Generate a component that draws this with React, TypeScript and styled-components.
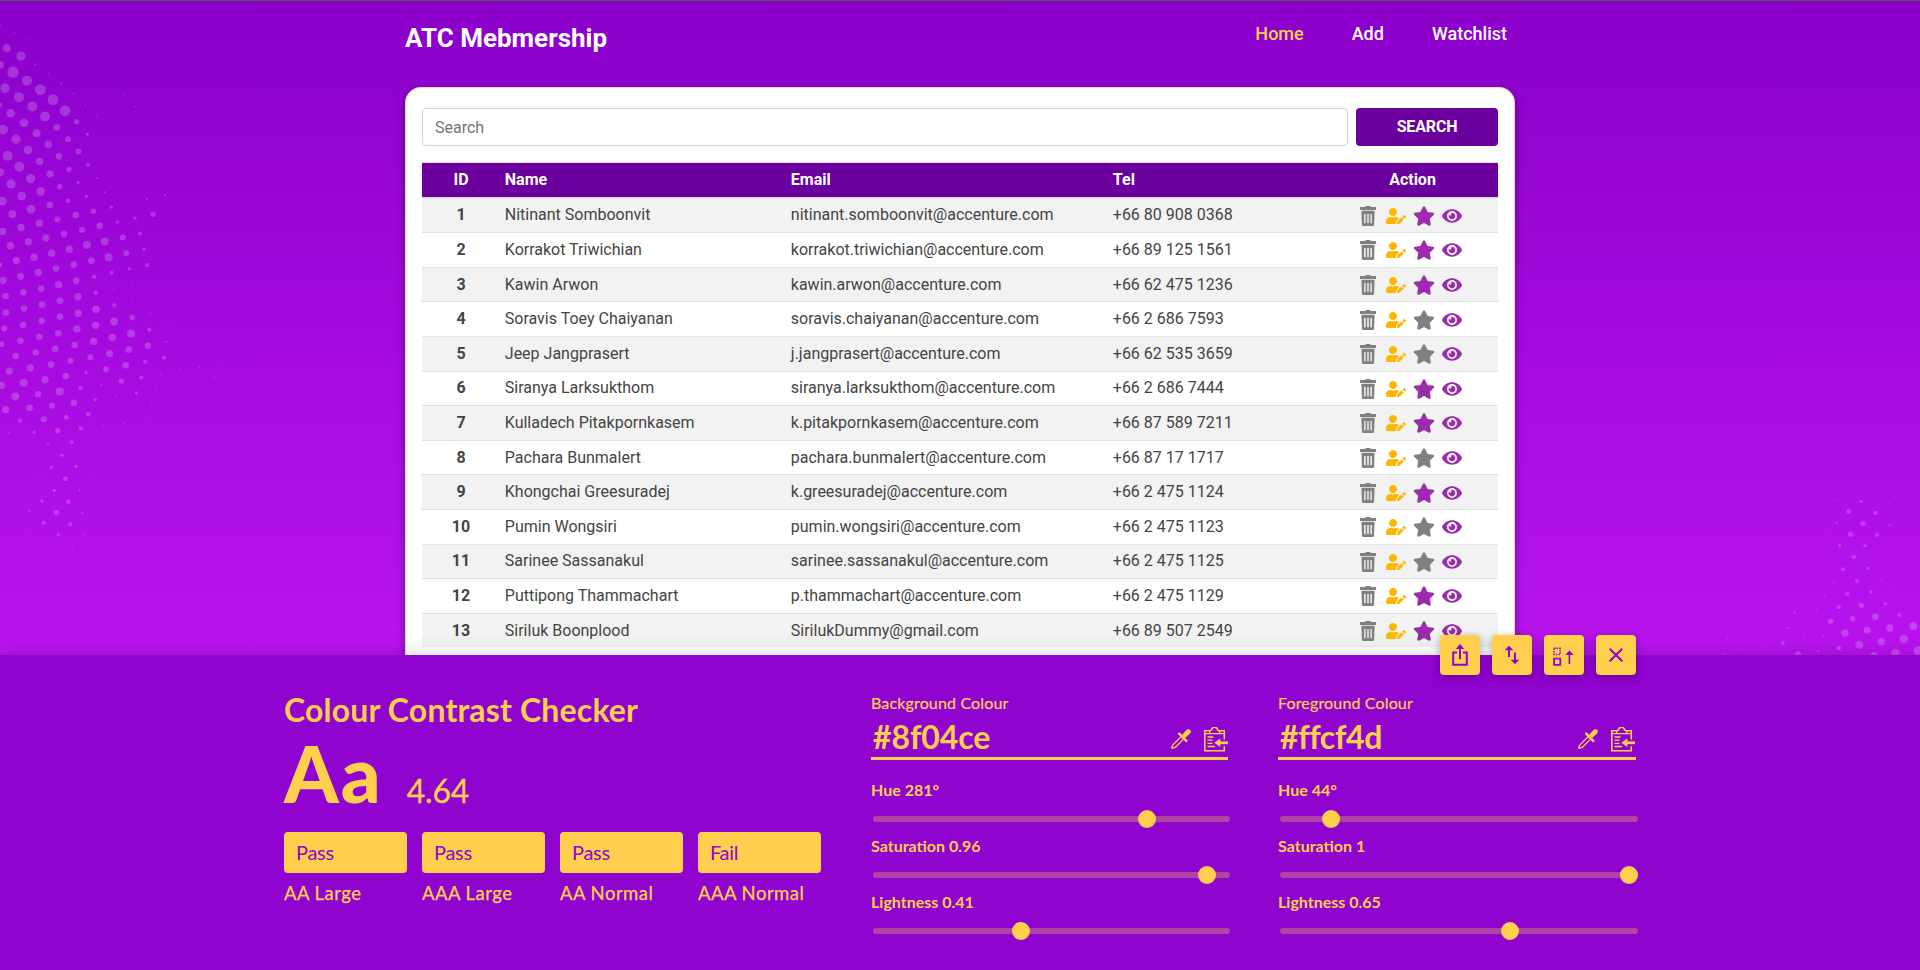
import React from "react";
import styled, { createGlobalStyle } from "styled-components";
import { FaEye, FaStar, FaUserEdit } from "react-icons/fa";

const GlobalStyle = createGlobalStyle`
  *, *::before, *::after { box-sizing: border-box; }
  body { margin: 0; font-family: Roboto, sans-serif; font-size: 16px; line-height: 1.5; color: #444; }
`;

const accent = "#ffcf4d";
const purple = "#8f04ce";
const deepPurple = "#6b009e";

const Page = styled.div`
  position: relative;
  height: 970px;
  overflow: hidden;
  border-top: 1px solid #555a58;
  background: linear-gradient(180deg, #8a00c9 0, #8f03cf 80px, #a70be0 370px, #b814ee 655px);
`;

const Dots = styled.svg<{ $side: "left" | "right" }>`
  position: absolute;
  ${(p) => (p.$side === "left" ? "left: 0; top: -1px;" : "right: 0; top: 469px;")}
  fill: rgba(255, 255, 255, 0.2);
`;

const Container = styled.div`
  position: relative;
  width: 1110px;
  margin: 0 auto;
`;

const Header = styled.header`
  display: flex;
  justify-content: space-between;
  height: 86px;
  padding: 17px 8px 0 0;
  color: #fff;
`;

const Brand = styled.h1`
  margin: 0;
  font-size: 26px;
  font-weight: 700;
  line-height: 40px;
`;

const Nav = styled.nav`
  display: flex;
  gap: 48px;
`;

const NavItem = styled.a<{ $active?: boolean }>`
  font-size: 18px;
  font-weight: 500;
  line-height: 32px;
  color: ${(p) => (p.$active ? accent : "#fff")};
`;

const Card = styled.main`
  padding: 20px 16px 24px;
  background: #fff;
  border: 1px solid rgba(0, 0, 0, 0.125);
  border-radius: 16px;
  box-shadow: 0 4px 10px rgba(0, 0, 0, 0.4);
`;

const SearchBar = styled.div`
  display: flex;
  gap: 8px;
  margin-bottom: 16px;
`;

const SearchInput = styled.input`
  flex: 1;
  height: 38px;
  padding: 6px 12px;
  border: 1px solid #ced4da;
  border-radius: 4px;
  font: 400 16px/24px Roboto, sans-serif;
  &::placeholder { color: #6c757d; opacity: 1; }
`;

const SearchButton = styled.button`
  width: 142px;
  height: 38px;
  padding: 0 6px 2px 6px;
  border: 0;
  border-radius: 4px;
  background: ${deepPurple};
  color: #fff;
  font: 700 16px Roboto, sans-serif;
  letter-spacing: -0.15px;
`;

const Table = styled.table`
  width: 100%;
  table-layout: fixed;
  border-collapse: collapse;
  tbody tr:nth-child(odd) { background: #f2f2f2; }
`;

const HeadCell = styled.th<{ $center?: boolean }>`
  padding: 4.8px;
  border-top: 1px solid #dee2e6;
  border-bottom: 2px solid #dee2e6;
  background: ${deepPurple};
  color: #fff;
  font-weight: 700;
  text-align: ${(p) => (p.$center ? "center" : "left")};
`;

const Cell = styled.td<{ $id?: boolean }>`
  padding: 4.8px;
  border-top: 1px solid #dee2e6;
  font-weight: ${(p) => (p.$id ? 700 : 400)};
  text-align: ${(p) => (p.$id ? "center" : "left")};
`;

const Actions = styled.div`
  display: flex;
  justify-content: center;
  align-items: center;
  gap: 8px;
  height: 24px;
  padding: 1px 6px 0 0;
`;

const TrashSvg = styled.svg`
  display: block;
  fill: #808080;
`;
const EditIcon = styled(FaUserEdit)`color: #ffb600;`;
const StarIcon = styled(FaStar)<{ $on: boolean }>`
  margin: 0 -1px;
  color: ${(p) => (p.$on ? "#9b2cac" : "#808080")};
`;
const EyeIcon = styled(FaEye)`color: #9b2cac;`;

const Panel = styled.section`
  position: absolute;
  left: 0;
  right: 0;
  bottom: 0;
  height: 315px;
  padding-top: 33px;
  background: ${purple};
  color: ${accent};
  font-family: Lato, sans-serif;
  box-shadow: 0 0 20px rgba(0, 0, 0, 0.18);
`;

const PanelInner = styled.div`
  position: relative;
  display: flex;
  width: 1352px;
  margin: 0 auto;
`;

const ToolButtons = styled.div`
  position: absolute;
  right: 0;
  top: -53px;
  display: flex;
  gap: 12px;
`;

const ToolButton = styled.button`
  display: block;
  width: 40px;
  height: 40px;
  padding: 0;
  border: 0;
  border-radius: 4px;
  background: ${accent};
  box-shadow: 0 2px 8px rgba(0, 0, 0, 0.3);
  svg { display: block; fill: none; stroke: ${purple}; stroke-width: 2; }
`;

const Summary = styled.div`
  width: 538px;
`;

const PanelTitle = styled.h2`
  margin: 0;
  padding-top: 2px;
  height: 42px;
  font-size: 32px;
  line-height: 40px;
  font-weight: 700;
  letter-spacing: 0.17px;
`;

const Sample = styled.div`
  display: flex;
  align-items: baseline;
  gap: 24px;
  height: 80px;
  margin: 3px 0 19px;
  line-height: 80px;
`;

const SampleText = styled.span`
  font-size: 78px;
  font-weight: 900;
  letter-spacing: 2px;
`;

const Ratio = styled.span`
  font-size: 32px;
  letter-spacing: -0.2px;
  -webkit-text-stroke: 0.3px;
`;

const Results = styled.div`
  display: flex;
  gap: 15px;
`;

const Result = styled.div`
  width: 123px;
`;

const Verdict = styled.div`
  display: flex;
  align-items: center;
  height: 41px;
  padding: 0 0 1px 12px;
  margin-bottom: 8px;
  border-radius: 4px;
  background: ${accent};
  color: ${purple};
  font-size: 20px;
  line-height: 24px;
  letter-spacing: -0.3px;
`;

const ResultLabel = styled.div`
  font-size: 18.5px;
  line-height: 24px;
  letter-spacing: 0.48px;
  white-space: nowrap;
  -webkit-text-stroke: 0.25px;
`;

const ColourColumn = styled.div<{ $width: number; $offset: number }>`
  width: ${(p) => p.$width}px;
  margin-left: ${(p) => p.$offset}px;
  padding-top: 5px;
`;

const FieldLabel = styled.div`
  font-size: 16px;
  line-height: 20px;
  letter-spacing: 0.15px;
  -webkit-text-stroke: 0.2px;
`;

const HexField = styled.div`
  display: flex;
  align-items: center;
  height: 47px;
  padding-left: 2px;
  margin-bottom: 20px;
  border-bottom: 3px solid ${accent};
`;

const HexValue = styled.span<{ $tight?: boolean }>`
  flex: 1;
  padding-top: 3px;
  font-size: 32px;
  font-weight: 700;
  line-height: 38px;
  letter-spacing: ${(p) => (p.$tight ? "-0.4px" : "-0.1px")};
`;

const FieldIcons = styled.div<{ $inset: number }>`
  display: flex;
  align-items: center;
  gap: 13px;
  padding: 8px ${(p) => p.$inset}px 0 0;
  svg { display: block; }
`;

const SliderLabel = styled.div`
  font-size: 16px;
  font-weight: 700;
  line-height: 20px;
`;

const Track = styled.div`
  height: 6px;
  margin: 16px -2px 14px 2px;
  padding: 0 9px;
  border-radius: 3px;
  background: #b145a4;
`;

const Thumb = styled.div`
  position: relative;
  top: -6px;
  width: 18px;
  height: 18px;
  margin-left: -9px;
  border-radius: 50%;
  background: ${accent};
`;

const ThumbRail = styled.div`
  height: 6px;
`;

type Dot = [number, number, number];

/* Halftone dots: centre x, centre y, radius, in thirds of a pixel. */
const leftDots: Dot[] = [
  [1,72,3],[44,90,3],[87,111,3],[20,135,12],[63,157,14],[0,181,12],[105,180,4],[39,202,17],[145,205,3],[81,226,15],[184,233,4],[15,247,14],[121,251,16],[221,262,4],[57,272,15],[159,279,16],[374,265,3],[405,299,3],[256,294,3],[0,293,7],[97,298,15],[195,310,16],[32,317,13],[135,326,15],[290,327,3],
  [72,344,13],[230,341,8],[9,363,15],[170,357,10],[110,373,12],[262,376,5],[48,390,14],[204,390,9],[145,404,11],[292,412,2],[84,420,13],[235,424,9],[23,436,15],[177,438,10],[119,452,11],[264,461,6],[58,467,15],[207,474,8],[0,483,12],[150,487,11],[92,500,14],[290,499,4],[33,515,14],[234,511,5],[179,523,8],
  [122,536,13],[314,538,4],[65,549,13],[259,550,5],[7,563,13],[204,562,7],[149,574,10],[93,586,13],[334,580,5],[280,591,8],[37,599,12],[227,602,10],[172,614,9],[118,625,11],[352,622,5],[405,611,5],[441,557,4],[495,546,4],[459,600,8],[299,632,10],[63,637,11],[246,644,9],[8,648,11],[192,655,10],[138,666,11],[368,665,9],[420,654,6],
  [31,688,11],[85,677,11],[314,676,12],[261,686,12],[208,698,11],[432,698,5],[155,709,11],[379,709,9],[102,720,11],[326,720,12],[49,730,11],[274,730,10],[0,741,7],[221,741,10],[441,742,6],[168,752,10],[388,753,5],[115,763,11],[335,764,6],[62,774,10],[282,775,7],[9,785,11],[229,786,10],[176,797,11],[394,798,3],[123,808,10],[341,809,3],[70,819,10],[287,820,7],[17,829,10],
  [234,831,11],[180,842,10],[397,844,3],[126,853,10],[343,854,6],[72,864,10],[288,866,11],[18,875,10],[235,877,11],[451,878,3],[180,887,10],[397,889,8],[125,898,10],[342,900,12],[69,910,10],[287,911,11],[503,912,2],[13,920,9],[231,921,11],[448,923,6],[175,933,10],[393,934,12],[118,943,10],[337,945,11],[61,954,10],[281,956,11],[499,957,4],
  [4,964,9],[224,966,10],[443,968,10],[166,977,10],[386,979,10],[548,992,2],[107,987,10],[329,990,11],[47,997,10],[271,1000,9],[492,1002,6],[212,1010,9],[435,1013,6],[655,1015,2],[153,1021,10],[377,1023,10],[598,1026,4],[91,1030,11],[318,1034,9],[540,1036,3],[28,1039,11],[258,1044,5],[482,1047,3],[197,1053,10],[424,1057,6],[642,1058,3],
  [135,1063,11],[364,1067,8],[587,1069,2],[71,1072,12],[304,1077,4],[529,1081,2],[5,1079,11],[242,1087,6],[470,1091,3],[179,1096,12],[409,1100,5],[114,1104,10],[348,1110,3],[575,1114,2],[46,1110,12],[286,1119,5],[222,1128,10],[455,1134,3],[156,1136,9],[393,1143,3],[89,1142,10],[17,1147,11],[331,1153,2],[265,1160,7],[199,1168,7],[131,1174,9],[60,1178,6],[373,1185,3],[436,1176,2],[309,1193,3],
  [242,1200,6],[173,1206,8],[102,1210,5],[28,1213,4],[417,1217,2],[284,1232,3],[215,1238,6],[144,1243,4],[70,1245,2],[258,1270,3],[186,1275,5],[112,1277,3],[228,1306,5],[154,1308,5],[196,1341,7],[120,1341,2],[270,1338,2],[163,1373,5],[239,1373,4],[126,1403,5],[205,1405,7],[281,1405,2],[88,1431,4],[169,1435,8],[247,1437,4],[131,1464,6],[211,1468,6],[92,1491,2],[175,1497,5],[254,1499,3],[136,1525,2],[217,1530,3],[47,1458,2],
];

const rightDots: Dot[] = [
  [620,59,2],[584,91,3],[663,94,5],[701,66,1],[745,101,3],[626,125,7],[706,129,7],[590,158,4],[669,160,8],[749,165,4],[632,193,8],[711,195,6],[557,194,2],[599,227,5],[675,227,5],[755,230,2],[641,261,7],[567,265,2],[609,298,6],[683,295,5],[580,337,3],[651,333,6],[725,330,3],[553,377,3],[622,371,6],[693,366,5],[767,364,2],[596,412,6],[664,406,8],[736,401,5],[810,398,3],[529,419,3],[420,394,2],[401,438,2],[464,428,4],[508,463,2],[572,454,8],[638,446,8],[706,440,10],[778,435,6],[444,473,4],[382,484,2],[551,498,4],[615,489,11],[681,481,10],[749,474,11],[820,468,12],[262,504,3],[428,519,6],[489,508,3],[596,534,7],[658,524,12],[724,515,11],[791,507,13],[368,529,2],[308,540,2],[251,552,3],[534,544,4],[474,553,9],[702,557,11],[766,549,13],[834,542,13],
];

const Halftone = ({ side, dots, width, height, stretch }: { side: "left" | "right"; dots: Dot[]; width: number; height: number; stretch: number }) => (
  <Dots $side={side} width={width} height={height} viewBox={`0 0 ${width * 3} ${height * 3}`}>
    {dots.map(([x, y, r], i) => (
      <circle key={i} cx={x} cy={y * stretch} r={r < 5 ? r * 0.75 : r} />
    ))}
  </Dots>
);

const members: [string, string, string, boolean][] = [
  ["Nitinant Somboonvit", "nitinant.somboonvit@accenture.com", "+66 80 908 0368", true],
  ["Korrakot Triwichian", "korrakot.triwichian@accenture.com", "+66 89 125 1561", true],
  ["Kawin Arwon", "kawin.arwon@accenture.com", "+66 62 475 1236", true],
  ["Soravis Toey Chaiyanan", "soravis.chaiyanan@accenture.com", "+66 2 686 7593", false],
  ["Jeep Jangprasert", "j.jangprasert@accenture.com", "+66 62 535 3659", false],
  ["Siranya Larksukthom", "siranya.larksukthom@accenture.com", "+66 2 686 7444", true],
  ["Kulladech Pitakpornkasem", "k.pitakpornkasem@accenture.com", "+66 87 589 7211", true],
  ["Pachara Bunmalert", "pachara.bunmalert@accenture.com", "+66 87 17 1717", false],
  ["Khongchai Greesuradej", "k.greesuradej@accenture.com", "+66 2 475 1124", true],
  ["Pumin Wongsiri", "pumin.wongsiri@accenture.com", "+66 2 475 1123", false],
  ["Sarinee Sassanakul", "sarinee.sassanakul@accenture.com", "+66 2 475 1125", false],
  ["Puttipong Thammachart", "p.thammachart@accenture.com", "+66 2 475 1129", true],
  ["Siriluk Boonplood", "SirilukDummy@gmail.com", "+66 89 507 2549", true],
];

const TrashIcon = () => (
  <TrashSvg width="20" height="20" viewBox="0 0 20 20">
    <path d="M7.500 0h5v1H18v3H2V1h5.500z" />
    <path fillRule="evenodd" d="M3.400 4.700h13.200L16.100 18.800a1.300 1.300 0 0 1-1.300 1.200H5.200a1.300 1.300 0 0 1-1.300-1.200zM6.200 8v9.200h1.400V8zm3.100 0v9.200h1.400V8zm3.100 0v9.200h1.400V8z" />
  </TrashSvg>
);

const EyedropperIcon = () => (
  <svg width="20" height="20" viewBox="0 0 20 20" fill="none" stroke={accent}>
    <path d="M11.300 6.500 2 15.800 .8 18.200v1h1.100l2.600-1.100 9.200-9.200" strokeWidth="1.300" />
    <path d="M8.200 4.700 15.300 11.800" strokeWidth="2.600" strokeLinecap="round" />
    <path d="m11 6 3.500-4c1.600-2 3.500-2.400 4.700-1.200s.8 3.200-1.200 4.700l-4 3.500z" fill={accent} stroke="none" />
  </svg>
);

const ClipboardIcon = () => (
  <svg width="24" height="25" viewBox="0 0 24 25" fill="none" stroke={accent} strokeWidth="1.500">
    <path d="M20.300 12.500V3.700H15l-1.500-1a3 3 0 0 0-5.900 0l-1.500 1H.8v20h19.500v-4.500" />
    <path d="M1 6.700h4.700V4m14.500 2.700h-4.500V4M5.700 6.700h10M3.500 10h6M3.500 13.200h5M3.500 16.300h5M3.500 19.500h7.500" strokeWidth="1.300" />
    <path d="M24 15.800h-9" strokeWidth="2.800" />
    <path d="m10.300 15.800 6-4.300v8.600z" fill={accent} stroke="none" />
  </svg>
);

const Head = styled.path`
  fill: ${purple};
  stroke: none;
`;

const ShareIcon = () => (
  <svg width="40" height="40" viewBox="0 0 40 40">
    <path d="M17 17.500h-3.800v12.300h13.600V17.500H23M20 24.300V12" />
    <Head d="m15.700 14 4.300-5 4.300 5z" />
  </svg>
);

const SwapIcon = () => (
  <svg width="40" height="40" viewBox="0 0 40 40">
    <path d="M17 22V14M23 17.500V26" />
    <Head d="m12.700 15.200 4.300-4.400 4.300 4.400zM18.700 24.800l4.300 4.400 4.300-4.400z" />
  </svg>
);

const DockIcon = () => (
  <svg width="40" height="40" viewBox="0 0 40 40">
    <path d="M10 13.200h6.200v6.200H10z" strokeWidth="1.500" strokeDasharray="1.550 1" />
    <path d="M10.100 23.600h6.200v6.200h-6.200z" strokeWidth="1.800" />
    <path d="M25.400 29V18" strokeWidth="1.600" />
    <Head d="m21.200 20 4.200-4.600 4.200 4.600z" />
  </svg>
);

const CloseIcon = () => (
  <svg width="40" height="40" viewBox="0 0 40 40">
    <path d="m13.700 13.700 12.600 12.600m0-12.600L13.700 26.300" />
  </svg>
);

const Slider = ({ label, value }: { label: string; value: number }) => (
  <div>
    <SliderLabel>{label}</SliderLabel>
    <Track>
      <ThumbRail style={{ paddingLeft: `${value * 100}%` }}>
        <Thumb />
      </ThumbRail>
    </Track>
  </div>
);

interface ColourProps {
  title: string;
  hex: string;
  width: number;
  offset: number;
  inset: number;
  tight?: boolean;
  sliders: [string, number][];
}

const ColourPicker = ({ title, hex, width, offset, inset, tight, sliders }: ColourProps) => (
  <ColourColumn $width={width} $offset={offset}>
    <FieldLabel>{title}</FieldLabel>
    <HexField>
      <HexValue $tight={tight}>{hex}</HexValue>
      <FieldIcons $inset={inset}>
        <EyedropperIcon />
        <ClipboardIcon />
      </FieldIcons>
    </HexField>
    {sliders.map(([label, value]) => (
      <Slider key={label} label={label} value={value} />
    ))}
  </ColourColumn>
);

const results = [
  ["Pass", "AA Large"],
  ["Pass", "AAA Large"],
  ["Pass", "AA Normal"],
  ["Fail", "AAA Normal"],
];

export default function App() {
  return (
    <Page>
      <GlobalStyle />
      <Halftone side="left" dots={leftDots} width={400} height={560} stretch={15 / 14} />
      <Halftone side="right" dots={rightDots} width={280} height={200} stretch={1} />
      <Container>
        <Header>
          <Brand>ATC Mebmership</Brand>
          <Nav>
            <NavItem $active>Home</NavItem>
            <NavItem>Add</NavItem>
            <NavItem>Watchlist</NavItem>
          </Nav>
        </Header>
        <Card>
          <SearchBar>
            <SearchInput placeholder="Search" />
            <SearchButton>SEARCH</SearchButton>
          </SearchBar>
          <Table>
            <colgroup>
              <col width="78" />
              <col width="286" />
              <col width="322" />
              <col width="219" />
              <col width="171" />
            </colgroup>
            <thead>
              <tr>
                <HeadCell $center>ID</HeadCell>
                <HeadCell>Name</HeadCell>
                <HeadCell>Email</HeadCell>
                <HeadCell>Tel</HeadCell>
                <HeadCell $center>Action</HeadCell>
              </tr>
            </thead>
            <tbody>
              {members.map(([name, email, tel, starred], i) => (
                <tr key={email}>
                  <Cell $id>{i + 1}</Cell>
                  <Cell>{name}</Cell>
                  <Cell>{email}</Cell>
                  <Cell>{tel}</Cell>
                  <Cell>
                    <Actions>
                      <TrashIcon />
                      <EditIcon size={20} />
                      <StarIcon size={22} $on={starred} />
                      <EyeIcon size={20} />
                    </Actions>
                  </Cell>
                </tr>
              ))}
            </tbody>
          </Table>
        </Card>
      </Container>
      <Panel>
        <PanelInner>
          <ToolButtons>
            <ToolButton aria-label="Share"><ShareIcon /></ToolButton>
            <ToolButton aria-label="Swap colours"><SwapIcon /></ToolButton>
            <ToolButton aria-label="Move to top"><DockIcon /></ToolButton>
            <ToolButton aria-label="Close"><CloseIcon /></ToolButton>
          </ToolButtons>
          <Summary>
            <PanelTitle>Colour Contrast Checker</PanelTitle>
            <Sample>
              <SampleText>Aa</SampleText>
              <Ratio>4.64</Ratio>
            </Sample>
            <Results>
              {results.map(([verdict, label]) => (
                <Result key={label}>
                  <Verdict>{verdict}</Verdict>
                  <ResultLabel>{label}</ResultLabel>
                </Result>
              ))}
            </Results>
          </Summary>
          <ColourPicker
            title="Background Colour"
            hex="#8f04ce"
            width={357}
            offset={49}
            inset={0}
            sliders={[["Hue 281°", 281 / 360], ["Saturation 0.96", 0.96], ["Lightness 0.41", 0.41]]}
          />
          <ColourPicker
            title="Foreground Colour"
            hex="#ffcf4d"
            width={358}
            offset={50}
            inset={1}
            tight
            sliders={[["Hue 44°", 44 / 360], ["Saturation 1", 1], ["Lightness 0.65", 0.65]]}
          />
        </PanelInner>
      </Panel>
    </Page>
  );
}
